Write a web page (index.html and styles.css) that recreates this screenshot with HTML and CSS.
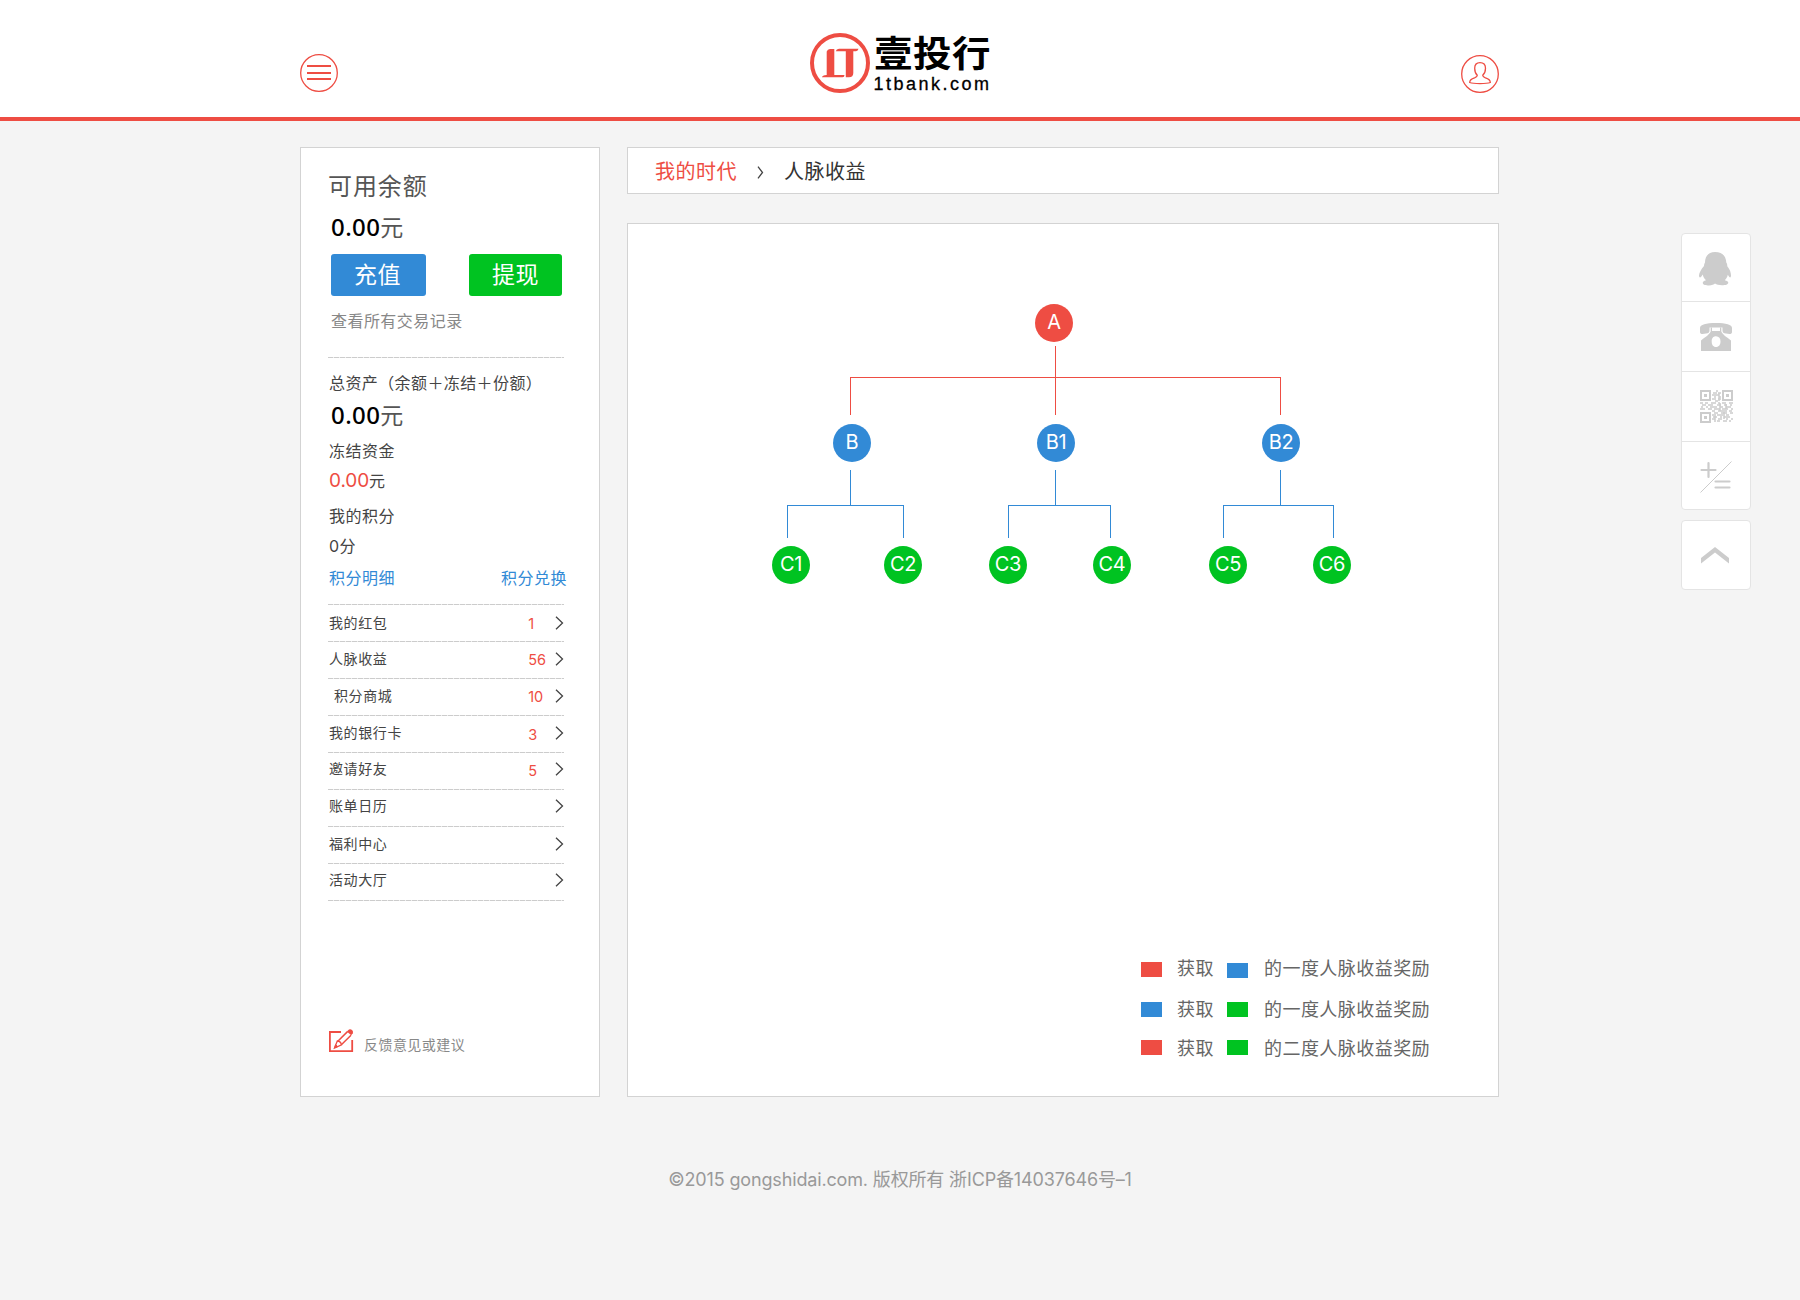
FILE: index.html
```html
<!DOCTYPE html>
<html lang="zh-CN">
<head>
<meta charset="utf-8">
<title>人脉收益 - 壹投行</title>
<link rel="stylesheet" href="styles.css">
</head>
<body>
<header class="header">
  <a class="menu-btn">
    <svg width="38" height="38" viewBox="0 0 38 38" fill="none" stroke="#ee4d43"><circle cx="19" cy="19" r="18.3" stroke-width="1.3"/><path d="M7 12h24M7 19h24M7 25h24" stroke-width="2"/></svg>
  </a>
  <a class="logo">
    <svg width="60" height="60" viewBox="0 0 60 60"><circle cx="30" cy="30" r="28" fill="none" stroke="#ee4d43" stroke-width="4"/><path fill="#ee4d43" d="M16.700 18.500Q17.500 16 20 16H24.300V42H34.500Q34.500 44.200 32.500 44.200H12Q12 42.500 16.700 42ZM25.800 18.300Q26.300 15.700 29 15.700H48.500Q48 18 46 18.300H43.300V40Q43.300 44.200 39 44.200H35.800V18.300Z"/></svg>
    <span class="wordmark"><span class="brand">壹投行</span><span class="domain">1tbank.com</span></span>
  </a>
  <a class="user-btn">
    <svg width="38" height="38" viewBox="0 0 38 38" fill="none" stroke="#ee4d43" stroke-width="1.300"><circle cx="19" cy="19" r="18.300"/><path d="M16.300 20.300C14.300 18.500 13.700 15.800 13.700 13.200C13.700 9.500 15.800 7.700 19 7.700S24.500 9.500 24.500 13.200C24.500 15.800 23.700 18.500 21.700 20.300C21.700 22 22.700 22.300 24.500 22.900C27.500 23.800 29.300 25 29.300 27.500C26.500 28.600 23 28.600 19 28.600S11.500 28.600 8.700 27.500C8.700 25 10.500 23.800 13.500 22.900C15.300 22.300 16.300 22 16.300 20.300Z"/></svg>
  </a>
</header>

<main class="page">
  <aside class="card account">
    <h2 class="title">可用余额</h2>
    <p class="amount first"><b>0.00</b>元</p>
    <div class="buttons"><a class="btn recharge">充值</a><a class="btn withdraw">提现</a></div>
    <a class="records">查看所有交易记录</a>
    <div class="dash top"></div>
    <p class="line total">总资产（余额＋冻结＋份额）</p>
    <p class="amount second"><b>0.00</b>元</p>
    <p class="line frozen">冻结资金</p>
    <p class="line frozen-sum"><span>0.00</span>元</p>
    <p class="line points">我的积分</p>
    <p class="line points-sum">0分</p>
    <p class="line links"><a>积分明细</a><a>积分兑换</a></p>
    <div class="dash list-start"></div>
    <ul class="list">
      <li class="low"><span>我的红包</span><em>1</em><svg class="arrow" viewBox="0 0 9 14"><path d="M1 .7L7.500 7L1 13.300"/></svg></li>
      <li><span>人脉收益</span><em>56</em><svg class="arrow" viewBox="0 0 9 14"><path d="M1 .7L7.500 7L1 13.300"/></svg></li>
      <li><span class="indent">积分商城</span><em>10</em><svg class="arrow" viewBox="0 0 9 14"><path d="M1 .7L7.500 7L1 13.300"/></svg></li>
      <li><span>我的银行卡</span><em class="drop">3</em><svg class="arrow" viewBox="0 0 9 14"><path d="M1 .7L7.500 7L1 13.300"/></svg></li>
      <li class="high"><span>邀请好友</span><em class="drop">5</em><svg class="arrow" viewBox="0 0 9 14"><path d="M1 .7L7.500 7L1 13.300"/></svg></li>
      <li class="high"><span>账单日历</span><em></em><svg class="arrow" viewBox="0 0 9 14"><path d="M1 .7L7.500 7L1 13.300"/></svg></li>
      <li><span>福利中心</span><em></em><svg class="arrow" viewBox="0 0 9 14"><path d="M1 .7L7.500 7L1 13.300"/></svg></li>
      <li class="high"><span>活动大厅</span><em></em><svg class="arrow" viewBox="0 0 9 14"><path d="M1 .7L7.500 7L1 13.300"/></svg></li>
    </ul>
    <a class="feedback">
      <svg width="25" height="24" viewBox="0 0 25 24" fill="none" stroke="#ee4d43"><path d="M12 3H.900V22.200H23.200V11" stroke-width="1.800"/><path d="M8.800 12.300L18.500 2.600M12.600 15.500L22 6.300" stroke-width="1.500"/><path d="M17.800 2.500L20 .5Q21.500 -.3 23 1T23.800 4.200L22.200 6.300Z" fill="#ee4d43" stroke="none"/><path d="M8.300 12L5.500 19L12.500 15.800Q12 12.500 8.300 12Z" stroke-width="1.300"/><path d="M6.600 15.800L5.500 19L8.800 17.600Z" fill="#ee4d43"/></svg>
      <span>反馈意见或建议</span>
    </a>
  </aside>

  <div class="content">
    <nav class="card crumbs"><a>我的时代</a><svg width="7" height="13" viewBox="0 0 7 13"><path d="M1 .7L5.500 6.500L1 12.300"/></svg><span>人脉收益</span></nav>
    <section class="card panel">
      <div class="tree">
        <svg class="links-layer" width="870" height="732" fill="none" shape-rendering="crispEdges">
          <path stroke="#ee4d43" d="M427.500 122V191M222.500 191V153.500H652.500V191"/>
          <path stroke="#328ad6" d="M222.500 246V281.500M159.500 314V281.500H275.500V314M427.500 246V281.500M380.500 314V281.500H482.500V314M652.500 246V281.500M595.500 314V281.500H705.500V314"/>
        </svg>
        <span class="node red a">A</span>
        <span class="node blue b">B</span><span class="node blue b1">B1</span><span class="node blue b2">B2</span>
        <span class="node green c1">C1</span><span class="node green c2">C2</span><span class="node green c3">C3</span><span class="node green c4">C4</span><span class="node green c5">C5</span><span class="node green c6">C6</span>
      </div>
      <div class="legend">
        <div class="row one"><i class="red"></i><span>获取</span><i class="blue low"></i><span>的一度人脉收益奖励</span></div>
        <div class="row two"><i class="blue"></i><span>获取</span><i class="green"></i><span>的一度人脉收益奖励</span></div>
        <div class="row three"><i class="red"></i><span>获取</span><i class="green"></i><span>的二度人脉收益奖励</span></div>
      </div>
    </section>
  </div>

  <aside class="tools">
    <div class="group">
      <a class="tool qq"><svg width="32" height="34" viewBox="0 0 32 34" fill="#ccc"><path d="M16 0C9.500 0 6 4.500 6 10.500C5.500 11.500 5 12.500 5 14C2 17.500 0 21 0 23.500C0 25.500 1 26 2 25L3.800 22.500C4.200 24.800 5.300 26.800 7 28.300C4.500 29 3.700 30 3.800 31C4 33 7 33.400 10 33.400C12.800 33.400 15 32.500 16 31.600C17.500 32.600 20 33.300 23 33.300C26.500 33.300 29.300 32.500 29.300 30.800C29.300 29.600 28 28.700 25.800 28.200C27.300 26.800 28.300 25 28.800 22.700L30.300 25C31.500 26 32 25 32 23.500C32 21 31 17.500 28.300 14.300C28.300 12.500 28 11.500 27.300 10.500C27 4.500 23.500 0 16 0Z"/></svg></a>
      <a class="tool phone"><svg width="32" height="28" viewBox="0 0 32 28" fill="#ccc"><path d="M0 5C0 1.500 6 0 16 0S32 1.500 32 5V9C32 10.500 31 11 29.500 11L26 10.500C23.500 10.300 22.500 9.500 22.500 7.500V4.500H9.500V7.500C9.500 9.500 8.500 10.300 6 10.500L2.500 11C1 11 0 10.500 0 9Z"/><path fill-rule="evenodd" d="M10.700 4.500H12V8H20V4.500H21.300V8.500C22.500 11.500 26 13.500 31 17.500V28H1V17.500C6 13.500 9.500 11.500 10.700 8.500ZM16 13.300C13 13.300 11.700 15.500 11.700 18.500S13 24 16 24S20.500 21.500 20.500 18.500S19 13.300 16 13.300Z"/></svg></a>
      <a class="tool qr"><svg width="33" height="33" viewBox="0 0 33 33" fill="none" stroke="#ccc"><path stroke-width="2" d="M1 1H10V10H1ZM23 1H32V10H23ZM1 23H10V32H1Z"/><path stroke="none" fill="#ccc" d="M4 4h3v3h-3zM26 4h3v3h-3zM4 26h3v3h-3z"/><path stroke-width="1.500" d="M16 1h2M13 3h2M18 3h3M12 5h3M17 5h2M14 7h2M19 7h2M12 9h4M18 9h3M15 11h3M0 13h3M5 13h3M11 13h5M18 13h2M22 13h4M29 13h4M2 15h4M8 15h5M17 15h4M24 15h3M30 15h2M1 17h2M6 17h2M10 17h7M20 17h3M26 17h5M0 19h5M8 19h4M14 19h6M22 19h6M31 19h2M12 21h3M18 21h5M25 21h2M29 21h3M14 23h4M21 23h6M30 23h3M12 25h2M17 25h6M26 25h3M13 27h4M20 27h2M24 27h6M12 29h3M18 29h4M26 29h2M31 29h2M14 31h2M17 31h3M23 31h4M29 31h2M16 2v4M19 3v8M20 13v8M26 14v5M15 24v6M24 20v9"/></svg></a>
      <a class="tool calc"><svg width="32" height="32" viewBox="0 0 32 32" fill="none" stroke="#ccc"><path d="M.5 31.500L31.500 .5" stroke-width="1"/><path d="M1.500 9H15.500M8.500 2V16M15.500 20.500H29.500M15.500 26.500H29.500" stroke-width="2.200" stroke-linecap="round"/></svg></a>
    </div>
    <a class="tool totop"><svg width="28" height="17" viewBox="0 0 28 17" fill="#ccc"><path d="M0 11L14 0L28 11V16.500L14 5.500L0 16.500Z"/></svg></a>
  </aside>
</main>

<footer class="footer">©2015 gongshidai.com. 版权所有 浙ICP备14037646号–1</footer>
</body>
</html>
```
FILE: styles.css
```css
* { box-sizing: border-box; }
body { margin: 0; width: 1800px; height: 1300px; background: #f4f4f4; color: #444; font-family: Inter, "Noto Sans CJK SC", sans-serif; }
h2, p, ul { margin: 0; padding: 0; font-weight: 400; }
svg { display: block; flex: none; }

.header { height: 121px; padding: 0 301px 0 300px; display: flex; justify-content: space-between; align-items: flex-start; background: #fff; border-bottom: 4px solid #ee4d43; }
.menu-btn { margin-top: 54px; }
.user-btn { margin-top: 55px; }
.logo { display: flex; width: 180px; margin-top: 33px; gap: 4px; color: #000; }
.wordmark { display: flex; flex-direction: column; width: 117px; }
.brand { font: 700 36px/36px "Noto Sans CJK SC", sans-serif; height: 38px; width: 108px; white-space: nowrap; letter-spacing: .5px; transform: scaleX(1.07); transform-origin: 0 0; }
.domain { font-family: "Liberation Sans", sans-serif; font-size: 18px; line-height: 20px; margin-top: 3px; letter-spacing: 2.500px; white-space: nowrap; -webkit-text-stroke: .3px #000; }

.page { display: flex; align-items: flex-start; padding: 26px 0 0 300px; }
.card { background: #fff; border: 1px solid #d3d3d3; }

.account { width: 300px; height: 950px; padding: 21px 35px 0 27px; }
.title { font-size: 24px; line-height: 36px; letter-spacing: .9px; color: #555; }
.amount { padding-left: 3px; font-size: 23px; color: #555; }
.amount b { font: 500 24px/30px "Noto Sans", sans-serif; color: #000; letter-spacing: .4px; }
.first { margin-top: 4px; height: 39px; line-height: 39px; }
.second { margin-top: 5px; height: 30px; line-height: 30px; }
.buttons { display: flex; justify-content: space-between; margin: 6px 2px 0 3px; }
.btn { height: 42px; border-radius: 3px; color: #fff; font-size: 23px; line-height: 43px; text-align: center; letter-spacing: .5px; }
.recharge { width: 95px; padding-right: 2px; background: #328ad6; }
.withdraw { width: 93px; background: #00c321; }
.records { display: block; margin: 13px 0 0 3px; font-size: 16px; line-height: 24px; letter-spacing: .45px; color: #888; }
.dash { height: 1px; background: repeating-linear-gradient(90deg, #ccc 0 5px, #eee 5px 6px); }
.top { margin-top: 24px; }
.line { height: 24px; padding-left: 1px; font-size: 16px; line-height: 24px; letter-spacing: .5px; white-space: nowrap; }
.total { margin-top: 13px; letter-spacing: .4px; }
.frozen { margin-top: 9px; }
.frozen-sum { margin-top: 6px; }
.frozen-sum span { font-size: 19px; letter-spacing: -.1px; color: #ee4d43; }
.points { margin-top: 11px; }
.points-sum { margin-top: 6px; }
.links { display: flex; justify-content: space-between; margin: 8px -3px 0 0; color: #328ad6; }
.list-start { margin-top: 14px; }
.list { list-style: none; }
.list li { display: flex; height: 37px; padding: 0 0 3px 1px; align-items: center; font-size: 14px; line-height: 20px; letter-spacing: .6px; background: repeating-linear-gradient(90deg, #ccc 0 5px, #eee 5px 6px) bottom / 100% 1px no-repeat; }
.list .low { padding-bottom: 1px; }
.list .high { padding-bottom: 5px; }
.list span { width: 200px; }
.list .indent { padding-left: 5px; }
.list em { width: 27px; padding-top: 1px; font-style: normal; font-size: 14.500px; letter-spacing: 0; color: #ee4d43; }
.list .drop { padding-top: 3px; }
.arrow { width: 9px; height: 14px; }
.arrow path, .crumbs path { fill: none; stroke: #444; stroke-width: 1.300; }
.feedback { display: flex; gap: 10px; margin: 128px 0 0 1px; height: 24px; font-size: 14px; line-height: 24px; letter-spacing: .45px; color: #888; }
.feedback span { padding-top: 4px; white-space: nowrap; }

.content { width: 872px; margin-left: 27px; }
.crumbs { display: flex; align-items: center; height: 47px; padding: 3px 0 0 27px; font-size: 20px; line-height: 30px; letter-spacing: .5px; color: #333; }
.crumbs a { color: #ee4d43; }
.crumbs svg { margin: 1px 20px 0 20px; }
.panel { height: 874px; margin-top: 29px; }
.tree { position: relative; height: 732px; }
.node { position: absolute; width: 38px; height: 38px; border-radius: 50%; color: #fff; font-size: 20px; line-height: 36px; letter-spacing: -.3px; text-align: center; }
.red { background: #ee4d43; }
.blue { background: #328ad6; }
.green { background: #00c321; }
.a { left: 407px; top: 80px; }
.b { left: 205px; top: 200px; }
.b1 { left: 409px; top: 200px; }
.b2 { left: 634px; top: 200px; }
.c1 { left: 144px; top: 322px; }
.c2 { left: 256px; top: 322px; }
.c3 { left: 361px; top: 322px; }
.c4 { left: 465px; top: 322px; }
.c5 { left: 581px; top: 322px; }
.c6 { left: 685px; top: 322px; }
.legend { padding-left: 513px; color: #666; font-size: 18px; line-height: 25px; letter-spacing: .45px; }
.row { display: flex; height: 24px; }
.row i { width: 21px; height: 15px; margin-top: 6px; }
.row .low { margin-top: 7px; }
.row span { margin-left: 16px; white-space: nowrap; }
.row span:nth-child(2) { width: 50px; margin-left: 15px; }
.two { margin-top: 17px; }
.two i { margin-top: 5px; }
.three { margin-top: 15px; }
.three i { margin-top: 4px; }

.tools { width: 70px; margin: 86px 0 0 182px; }
.group { border: 1px solid #e4e4e4; border-radius: 4px; background: #fff; height: 277px; }
.tool { display: flex; justify-content: center; align-items: flex-start; }
.qq { height: 67px; padding: 18px 2px 0 0; }
.phone { height: 70px; padding-top: 21px; border-top: 1px solid #e4e4e4; }
.qr { height: 70px; padding: 18px 0 0 1px; border-top: 1px solid #e4e4e4; }
.calc { height: 68px; padding-top: 19px; border-top: 1px solid #e4e4e4; }
.totop { height: 70px; margin-top: 10px; padding: 26px 2px 0 0; border: 1px solid #e4e4e4; border-radius: 4px; background: #fff; }

.footer { margin-top: 68px; font-size: 18px; line-height: 30px; letter-spacing: -.15px; text-align: center; color: #999; }
```
